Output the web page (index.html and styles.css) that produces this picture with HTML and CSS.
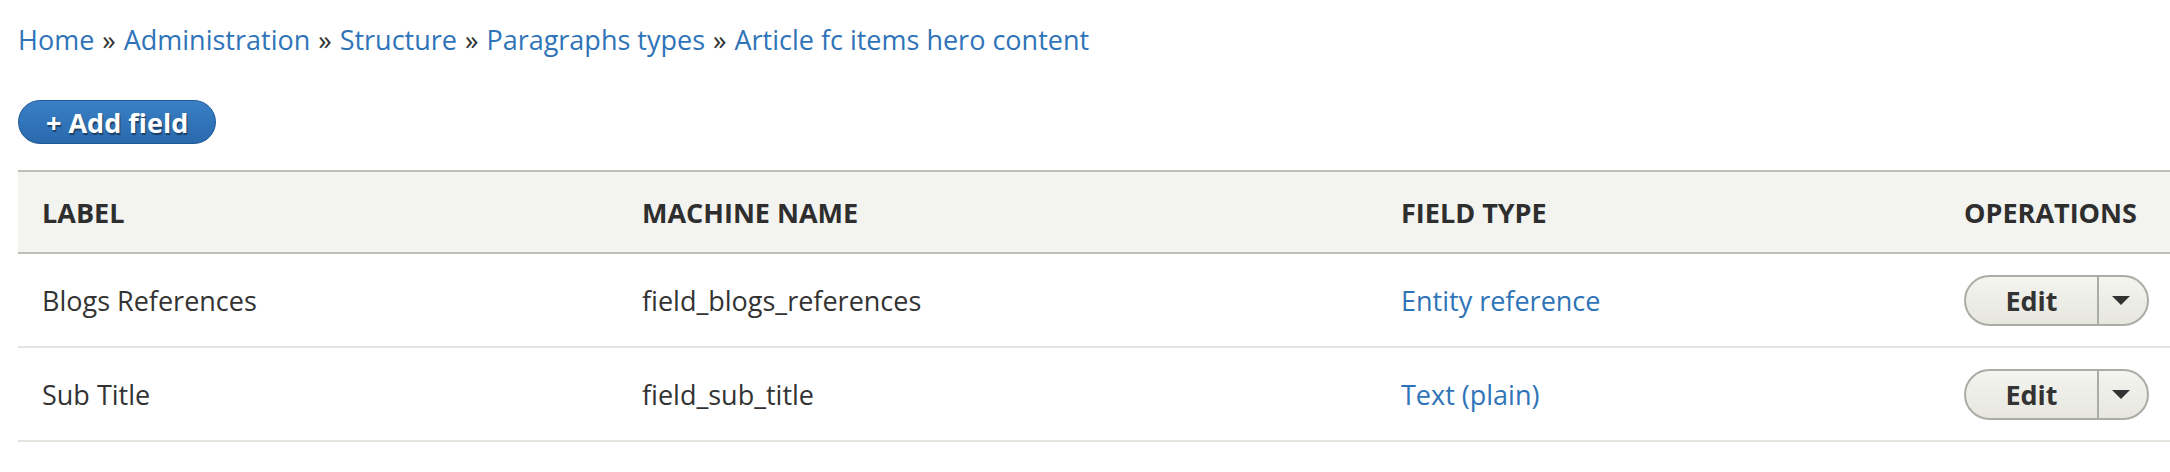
FILE: index.html
```html
<!DOCTYPE html>
<html lang="en">
<head>
<meta charset="utf-8">
<title>Manage fields</title>
<link rel="stylesheet" href="styles.css">
</head>
<body>
<nav class="breadcrumb">
  <a href="#">Home</a><span class="sep">»</span><a href="#">Administration</a><span class="sep">»</span><a href="#">Structure</a><span class="sep">»</span><a href="#">Paragraphs types</a><span class="sep">»</span><a href="#">Article fc items hero content</a>
</nav>
<div class="actions">
  <a class="btn-primary" href="#">+ Add field</a>
</div>
<table class="fields">
  <colgroup>
    <col class="c-label"><col class="c-machine"><col class="c-type"><col class="c-ops">
  </colgroup>
  <thead>
    <tr><th>LABEL</th><th>MACHINE NAME</th><th>FIELD TYPE</th><th>OPERATIONS</th></tr>
  </thead>
  <tbody>
    <tr>
      <td>Blogs References</td>
      <td>field_blogs_references</td>
      <td><a href="#">Entity reference</a></td>
      <td><div class="dropbutton"><span class="db-main">Edit</span><span class="db-toggle"><span class="tri"></span></span></div></td>
    </tr>
    <tr>
      <td>Sub Title</td>
      <td>field_sub_title</td>
      <td><a href="#">Text (plain)</a></td>
      <td><div class="dropbutton"><span class="db-main">Edit</span><span class="db-toggle"><span class="tri"></span></span></div></td>
    </tr>
  </tbody>
</table>
</body>
</html>
```

FILE: styles.css
```css
html, body {
  margin: 0;
  padding: 0;
  background: #fff;
  overflow: hidden;
}
body {
  font-family: "Open Sans", "DejaVu Sans", sans-serif;
  font-size: 27px;
  color: #333;
  padding: 0 0 0 18px;
}
a {
  color: #2f74b8;
  text-decoration: none;
}
.breadcrumb {
  margin-top: 20px;
  line-height: 39px;
  height: 39px;
  white-space: nowrap;
}
.breadcrumb .sep {
  color: #333;
  margin: 0 8px;
}
.actions {
  margin-top: 41px;
  height: 44px;
  display: flex;
}
.btn-primary {
  display: inline-flex;
  align-items: center;
  box-sizing: border-box;
  height: 44px;
  padding: 0 27px;
  border: 1px solid #1f5b96;
  border-radius: 22px;
  background: linear-gradient(#3a80c4, #2a69ae);
  color: #fff;
  font-weight: 700;
  text-shadow: 1px 2px 1px #1d3f66;
}
.fields {
  margin-top: 26px;
  border-collapse: separate;
  border-spacing: 0;
  table-layout: fixed;
  width: 2152px;
}
.c-label { width: 600px; }
.c-machine { width: 759px; }
.c-type { width: 563px; }
.c-ops { width: 230px; }
.fields th {
  background: #f3f3ef;
  border-top: 2px solid #bfbfba;
  border-bottom: 2px solid #bfbfba;
  text-align: left;
  font-weight: 700;
  height: 84px;
  padding: 0 24px;
  box-sizing: border-box;
  color: #2e2e2e;
  vertical-align: middle;
  white-space: nowrap;
}
.fields td {
  border-bottom: 2px solid #e6e4df;
  height: 94px;
  padding: 0 24px;
  box-sizing: border-box;
  vertical-align: middle;
  white-space: nowrap;
}
.dropbutton {
  display: flex;
  width: 185px;
  height: 51px;
  box-sizing: border-box;
  border: 2px solid #acaca7;
  border-radius: 26px;
  background: linear-gradient(#f4f4f0, #e7e6df);
  overflow: hidden;
}
.db-main {
  flex: 0 0 131px;
  display: flex;
  align-items: center;
  justify-content: center;
  font-weight: 700;
  color: #333;
}
.db-toggle {
  flex: 1;
  display: flex;
  align-items: center;
  justify-content: center;
  border-left: 2px solid #acaca7;
}
.tri {
  width: 0;
  height: 0;
  border-left: 9px solid transparent;
  border-right: 9px solid transparent;
  border-top: 9px solid #333;
  margin-right: 4px;
}
```
